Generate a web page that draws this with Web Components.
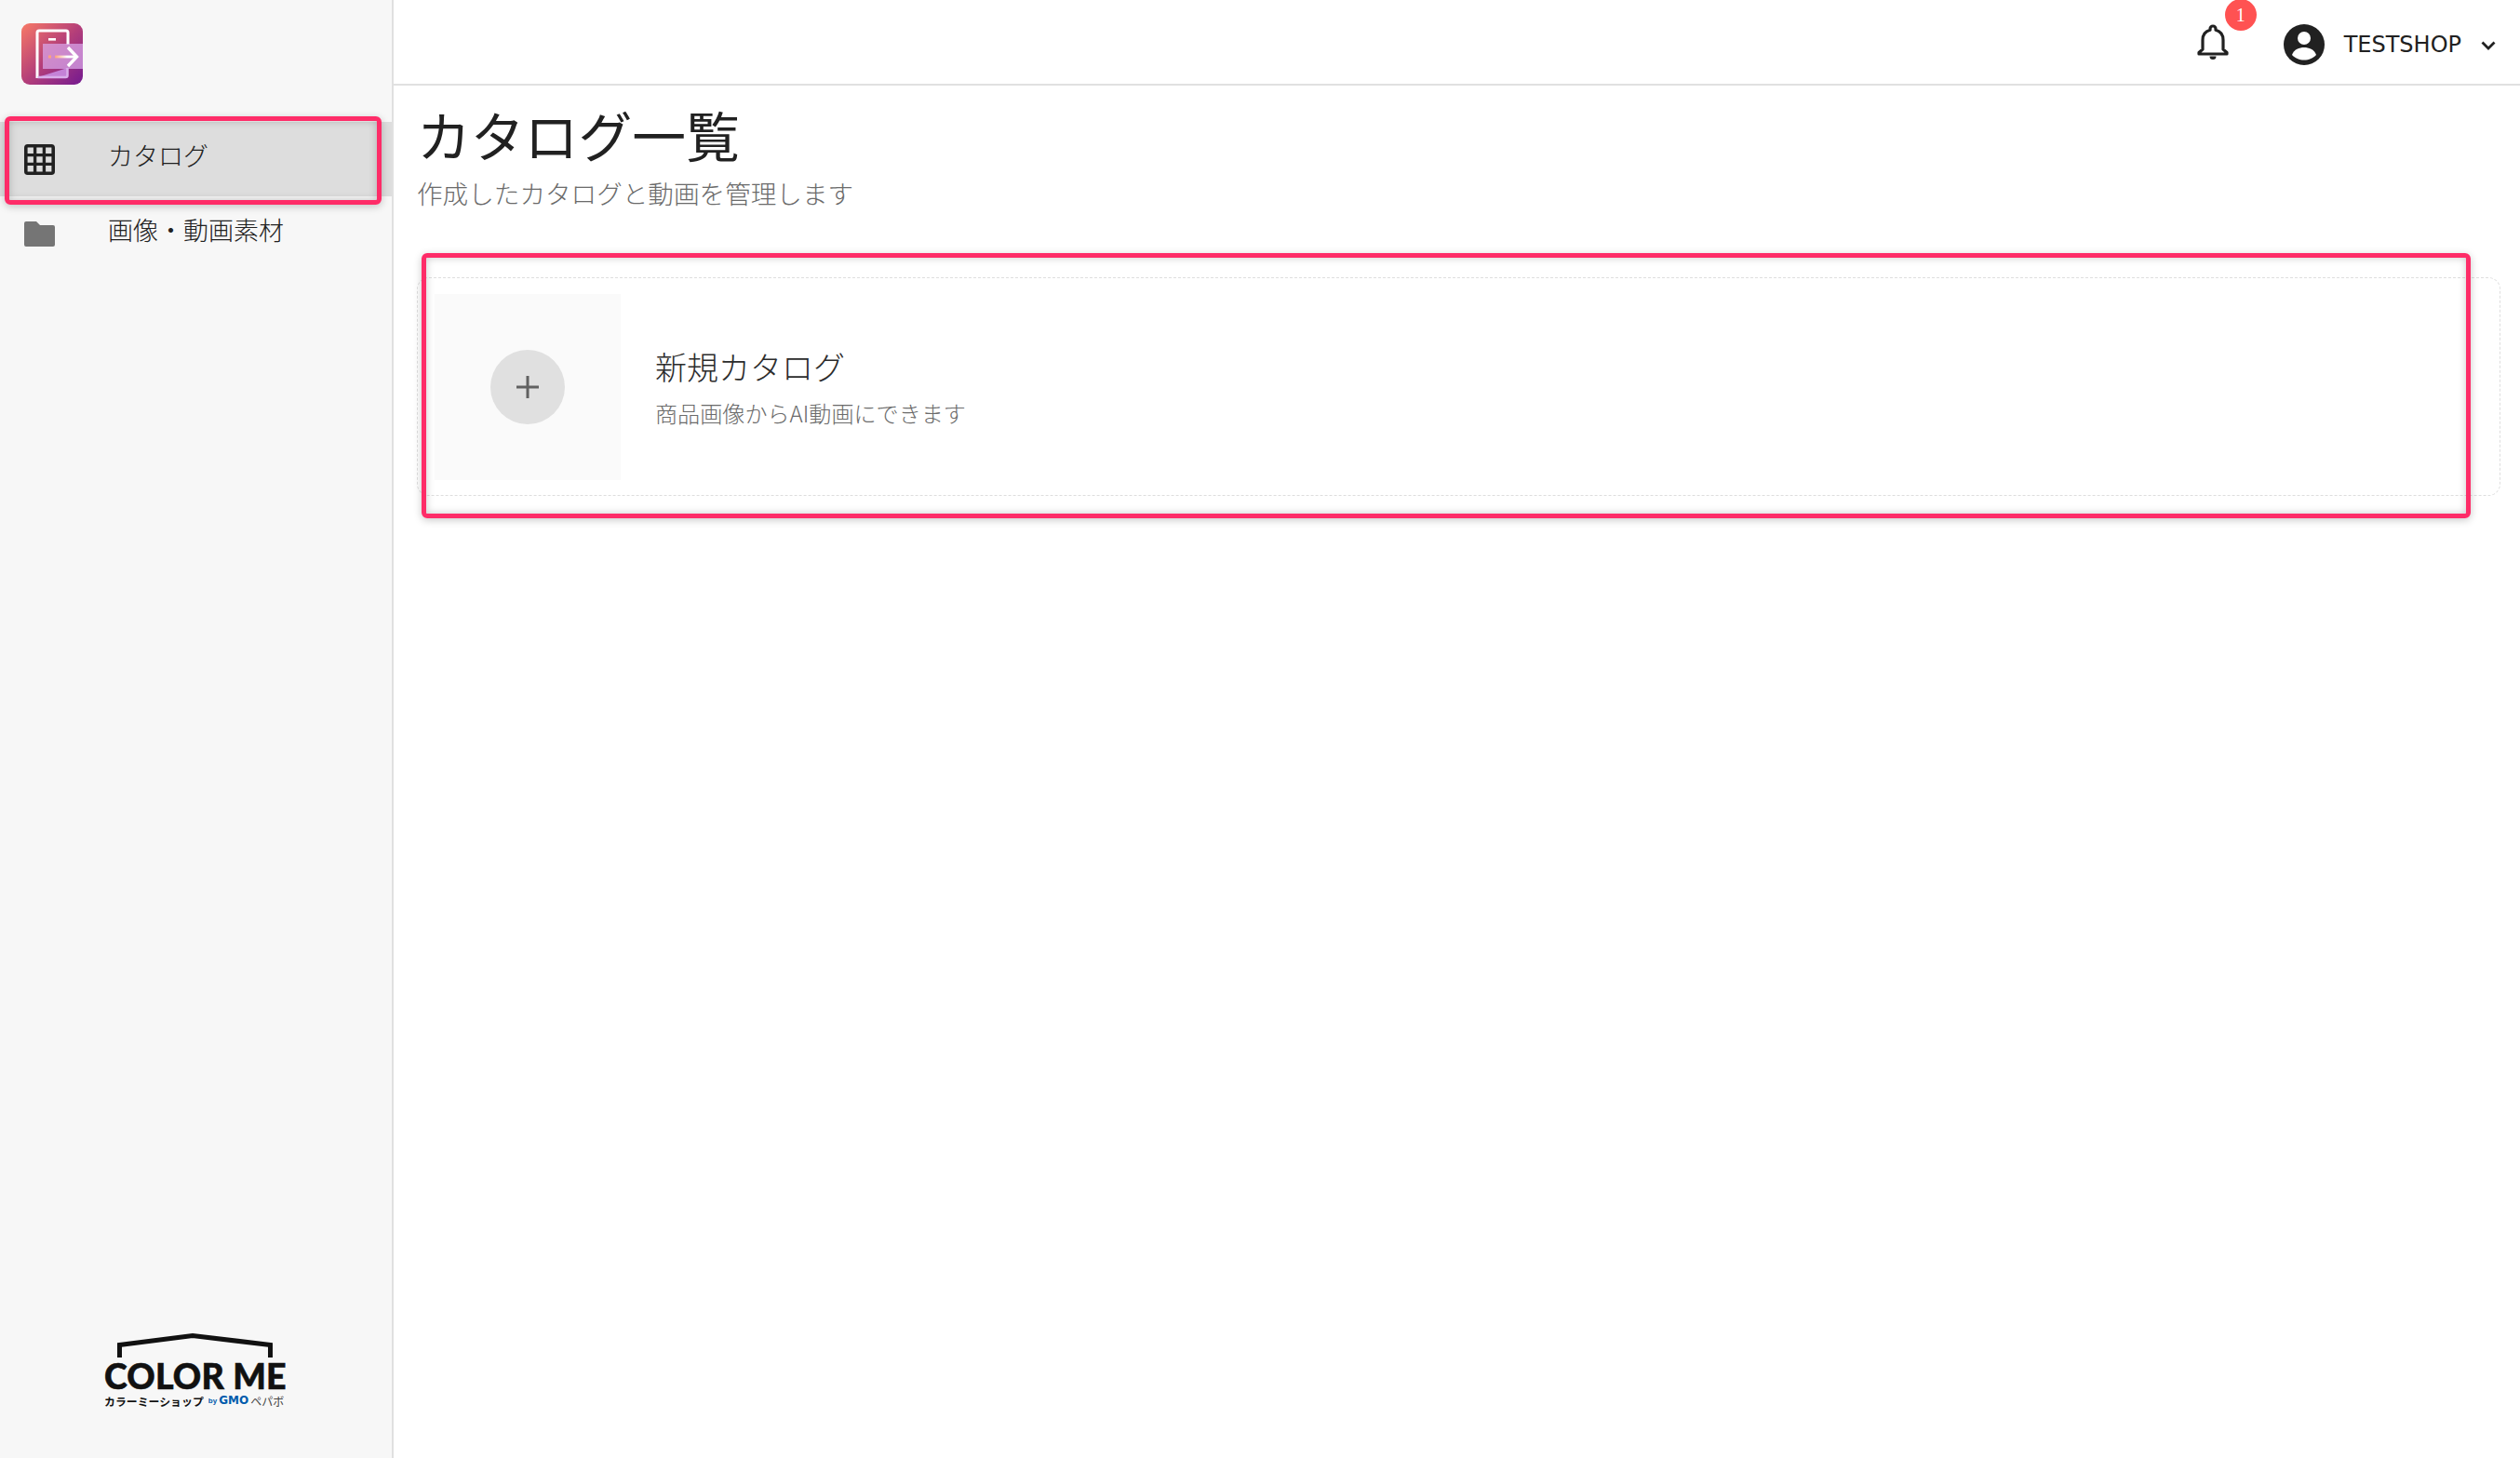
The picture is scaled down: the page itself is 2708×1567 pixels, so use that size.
<!DOCTYPE html>
<html lang="ja">
<head>
<meta charset="utf-8">
<title>カタログ一覧</title>
<style>
  html, body { margin: 0; height: 100%; }
  body {
    position: relative;
    overflow: hidden;
    background: #fff;
    color: #212121;
    font-family: "Noto Sans CJK JP", "Noto Sans", sans-serif;
    font-weight: 300;
  }
</style>
</head>
<body>
<app-shell>
  <app-sidebar slot="sidebar">
    <nav-item label="カタログ" icon="grid" active></nav-item>
    <nav-item label="画像・動画素材" icon="folder"></nav-item>
  </app-sidebar>
  <app-header slot="header" shop="TESTSHOP" count="1"></app-header>
  <page-title>
    <span slot="title">カタログ一覧</span>
    <span slot="sub">作成したカタログと動画を管理します</span>
  </page-title>
  <new-card>
    <span slot="title">新規カタログ</span>
    <span slot="sub">商品画像からAI動画にできます</span>
  </new-card>
</app-shell>
<mark-box style="left:5px;top:125px;width:405px;height:95px"></mark-box>
<mark-box style="left:453px;top:272px;width:2202px;height:285px"></mark-box>

<script>
class AppShell extends HTMLElement {
  constructor() {
    super();
    this.attachShadow({ mode: 'open' });
    this.shadowRoot.innerHTML = `
      <style>
        :host { display: grid; grid-template-columns: 423px 1fr; height: 100vh; }
        .main { min-width: 0; display: flex; flex-direction: column; }
        .content { padding: 0 21px 0 25px; }
      </style>
      <slot name="sidebar"></slot>
      <div class="main">
        <slot name="header"></slot>
        <div class="content"><slot></slot></div>
      </div>
    `;
  }
}

class AppSidebar extends HTMLElement {
  constructor() {
    super();
    this.attachShadow({ mode: 'open' });
    this.shadowRoot.innerHTML = `
      <style>
        :host {
          display: flex; flex-direction: column;
          background: #f7f7f7;
          border-right: 2px solid #e0e0e0;
          box-sizing: border-box;
          height: 100%;
        }
        .top { height: 131px; box-sizing: border-box; padding: 25px 0 0 23px; }
        .top svg { display: block; }
        nav { display: flex; flex-direction: column; }
        .brand {
          margin-top: auto;
          padding: 0 0 54px 0;
          display: flex; flex-direction: column; align-items: flex-start;
          margin-left: 112px;
          color: #111;
        }
        .roof { display: block; margin-left: 14px; }
        .name {
          font: 900 37.5px/30px Lato, sans-serif;
          letter-spacing: .2px;
          -webkit-text-stroke: .6px #111;
          margin-top: 4px;
          white-space: nowrap;
        }
        .small { display: flex; align-items: center; margin-top: 4px; white-space: nowrap; line-height: 15px; }
        .kana { font-size: 11.9px; font-weight: 700; }
        .by { font: 700 8px/15px "Liberation Sans", sans-serif; color: #005bac; margin-left: 5px; }
        .gmo { font: 700 12px/15px "DejaVu Sans", sans-serif; color: #005bac; margin-left: 2px; }
        .pepa { font-size: 12px; font-weight: 400; color: #444; margin-left: 2px; }
      </style>
      <div class="top">
        <svg width="66" height="66" viewBox="0 0 66 66">
          <defs>
            <linearGradient id="lg" x1="0" y1="0" x2="1" y2="1">
              <stop offset="0" stop-color="#f87a66"/>
              <stop offset=".5" stop-color="#b53f79"/>
              <stop offset="1" stop-color="#741a90"/>
            </linearGradient>
            <linearGradient id="arr" x1="0" y1="0" x2="1" y2="0">
              <stop offset="0" stop-color="#ffa27d"/>
              <stop offset=".6" stop-color="#fff"/>
            </linearGradient>
          </defs>
          <rect width="66" height="66" rx="9" fill="url(#lg)"/>
          <path d="M17 59V10a2 2 0 0 1 2-2h29a2 2 0 0 1 2 2v13" fill="none" stroke="#fff" stroke-width="3"/>
          <path d="M17.500 58h30a2 2 0 0 0 2-2v-8" fill="#c98ce0" fill-opacity=".9" stroke="#d9aeea" stroke-width="2.500"/>
          <rect x="23" y="22" width="43" height="27" fill="#d9a8ea" fill-opacity=".72"/>
          <rect x="29" y="16" width="8" height="2.600" fill="#fff"/>
          <rect x="29" y="34.500" width="3" height="3" fill="#ffa27d"/>
          <rect x="36" y="34.600" width="22" height="2.800" fill="url(#arr)"/>
          <path d="M50 26l9.500 10-9.500 10" fill="none" stroke="#fff" stroke-width="3.400"/>
        </svg>
      </div>
      <nav><slot></slot></nav>
      <div class="brand">
        <svg class="roof" width="168" height="27" viewBox="0 0 168 27">
          <path d="M2.500 26V12.500L81 2.500 164.500 12.500V26" fill="none" stroke="#111" stroke-width="5"/>
        </svg>
        <div class="name">COLOR ME</div>
        <div class="small">
          <span class="kana">カラーミーショップ</span><span class="by">by</span><span class="gmo">GMO</span><span class="pepa">ペパボ</span>
        </div>
      </div>
    `;
  }
}

class NavItem extends HTMLElement {
  constructor() {
    super();
    this.attachShadow({ mode: 'open' });
    const icons = {
      grid: `<svg width="33" height="33" viewBox="0 0 33 33"><rect x="1.800" y="1.800" width="29.400" height="29.400" rx="2" fill="none" stroke="#212121" stroke-width="3.600"/><path d="M11.600 2v29M21.400 2v29M2 11.600h29M2 21.400h29" stroke="#212121" stroke-width="3.400"/></svg>`,
      folder: `<svg width="33" height="27" viewBox="0 0 33 27"><path d="M2 0h11l4 4h14a2 2 0 0 1 2 2v19a2 2 0 0 1-2 2H2a2 2 0 0 1-2-2V2a2 2 0 0 1 2-2z" fill="#757575"/></svg>`
    };
    const active = this.hasAttribute('active');
    this.shadowRoot.innerHTML = `
      <style>
        :host { display: block; }
        .row {
          height: 80px; display: flex; align-items: center;
          padding-left: 26px;
          background: ${active ? '#dddddd' : 'transparent'};
          color: #212121;
          font-size: 27px;
        }
        .icon { width: 90px; display: flex; flex: none; }
        .label { line-height: 40px; position: relative; top: -4px; }
      </style>
      <div class="row">
        <span class="icon">${icons[this.getAttribute('icon')]}</span>
        <span class="label">${this.getAttribute('label')}</span>
      </div>
    `;
  }
}

class AppHeader extends HTMLElement {
  constructor() {
    super();
    this.attachShadow({ mode: 'open' });
    this.shadowRoot.innerHTML = `
      <style>
        :host {
          display: flex; align-items: center; justify-content: flex-end;
          height: 92px; box-sizing: border-box;
          border-bottom: 2px solid #e0e0e0;
          padding: 6px 26px 0 0;
          color: #212121;
        }
        .bell { position: relative; width: 34px; height: 40px; margin-right: 59px; margin-left: 2px; margin-top: -6px; }
        .bell svg { display: block; }
        .badge {
          position: absolute; left: 30px; top: -26px;
          width: 34px; height: 34px; border-radius: 50%;
          background: #ff5252; color: #fff;
          font: 20px/34px "Liberation Serif", serif;
          text-align: center;
        }
        .avatar { display: block; margin-right: 21px; }
        .shop { font: 400 24px/34px "DejaVu Sans", sans-serif; margin-right: 21px; }
        .chev { display: block; margin-top: 2px; }
      </style>
      <div class="bell">
        <svg width="34" height="40" viewBox="0 0 34 40">
          <path d="M17 3a3 3 0 0 0-3 3v1.200C8.700 8.600 6 13 6 18v10l-4 3.500V33h30v-1.500L28 28V18c0-5-2.700-9.400-8-10.800V6a3 3 0 0 0-3-3z" fill="none" stroke="#212121" stroke-width="3.200" stroke-linejoin="round"/>
          <path d="M13.500 35.500h7a3.500 3.500 0 0 1-7 0z" fill="#212121"/>
        </svg>
        <span class="badge">${this.getAttribute('count')}</span>
      </div>
      <svg class="avatar" width="44" height="44" viewBox="0 0 44 44">
        <circle cx="22" cy="22" r="22" fill="#212121"/>
        <circle cx="22" cy="15" r="7" fill="#fff"/>
        <path d="M9 33c2-6 8-8 13-8s11 2 13 8c-3 3.500-8 5.500-13 5.500S12 36.500 9 33z" fill="#fff"/>
      </svg>
      <span class="shop">${this.getAttribute('shop')}</span>
      <svg class="chev" width="16" height="10" viewBox="0 0 16 10">
        <path d="M1.500 1.500 8 8l6.500-6.500" fill="none" stroke="#212121" stroke-width="2.800"/>
      </svg>
    `;
  }
}

class PageTitle extends HTMLElement {
  constructor() {
    super();
    this.attachShadow({ mode: 'open' });
    this.shadowRoot.innerHTML = `
      <style>
        :host { display: block; padding-top: 21px; }
        h1 { margin: 0; font-size: 57.8px; font-weight: 400; line-height: 62px; color: #212121; }
        p { margin: 0; font-size: 27.6px; line-height: 34px; color: #6b6b6b; margin-top: 15px; }
      </style>
      <h1><slot name="title"></slot></h1>
      <p><slot name="sub"></slot></p>
    `;
  }
}

class NewCard extends HTMLElement {
  constructor() {
    super();
    this.attachShadow({ mode: 'open' });
    this.shadowRoot.innerHTML = `
      <style>
        :host {
          display: flex; align-items: center; gap: 37px;
          margin-top: 74px;
          height: 235px; box-sizing: border-box;
          padding: 0 17px 0 18px;
          border: 1px dashed #dedede;
          border-radius: 13px;
        }
        .thumb {
          width: 200px; height: 200px; flex: none;
          background: #fafafa;
          display: flex; align-items: center; justify-content: center;
        }
        .circle {
          width: 80px; height: 80px; border-radius: 50%;
          background: #e0e0e0;
          display: flex; align-items: center; justify-content: center;
        }
        .title { font-size: 34px; line-height: 44px; color: #2c2c2c; }
        .sub { font-size: 24.1px; line-height: 32px; color: #6b6b6b; margin-top: 12px; }
      </style>
      <div class="thumb">
        <div class="circle">
          <svg width="24" height="24" viewBox="0 0 24 24"><path d="M12 0v24M0 12h24" stroke="#616161" stroke-width="3"/></svg>
        </div>
      </div>
      <div>
        <div class="title"><slot name="title"></slot></div>
        <div class="sub"><slot name="sub"></slot></div>
      </div>
    `;
  }
}

// annotation frames drawn over the screenshot
class MarkBox extends HTMLElement {
  constructor() {
    super();
    this.attachShadow({ mode: 'open' });
    this.shadowRoot.innerHTML = `
      <style>
        :host {
          position: absolute; display: block; box-sizing: border-box;
          border: 5px solid #fe2c68;
          border-radius: 6px;
          box-shadow: 0 2px 8px rgba(0,0,0,.22), inset 0 0 8px rgba(0,0,0,.22);
          pointer-events: none;
        }
      </style>
    `;
  }
}

customElements.define('app-shell', AppShell);
customElements.define('app-sidebar', AppSidebar);
customElements.define('nav-item', NavItem);
customElements.define('app-header', AppHeader);
customElements.define('page-title', PageTitle);
customElements.define('new-card', NewCard);
customElements.define('mark-box', MarkBox);
</script>
</body>
</html>
